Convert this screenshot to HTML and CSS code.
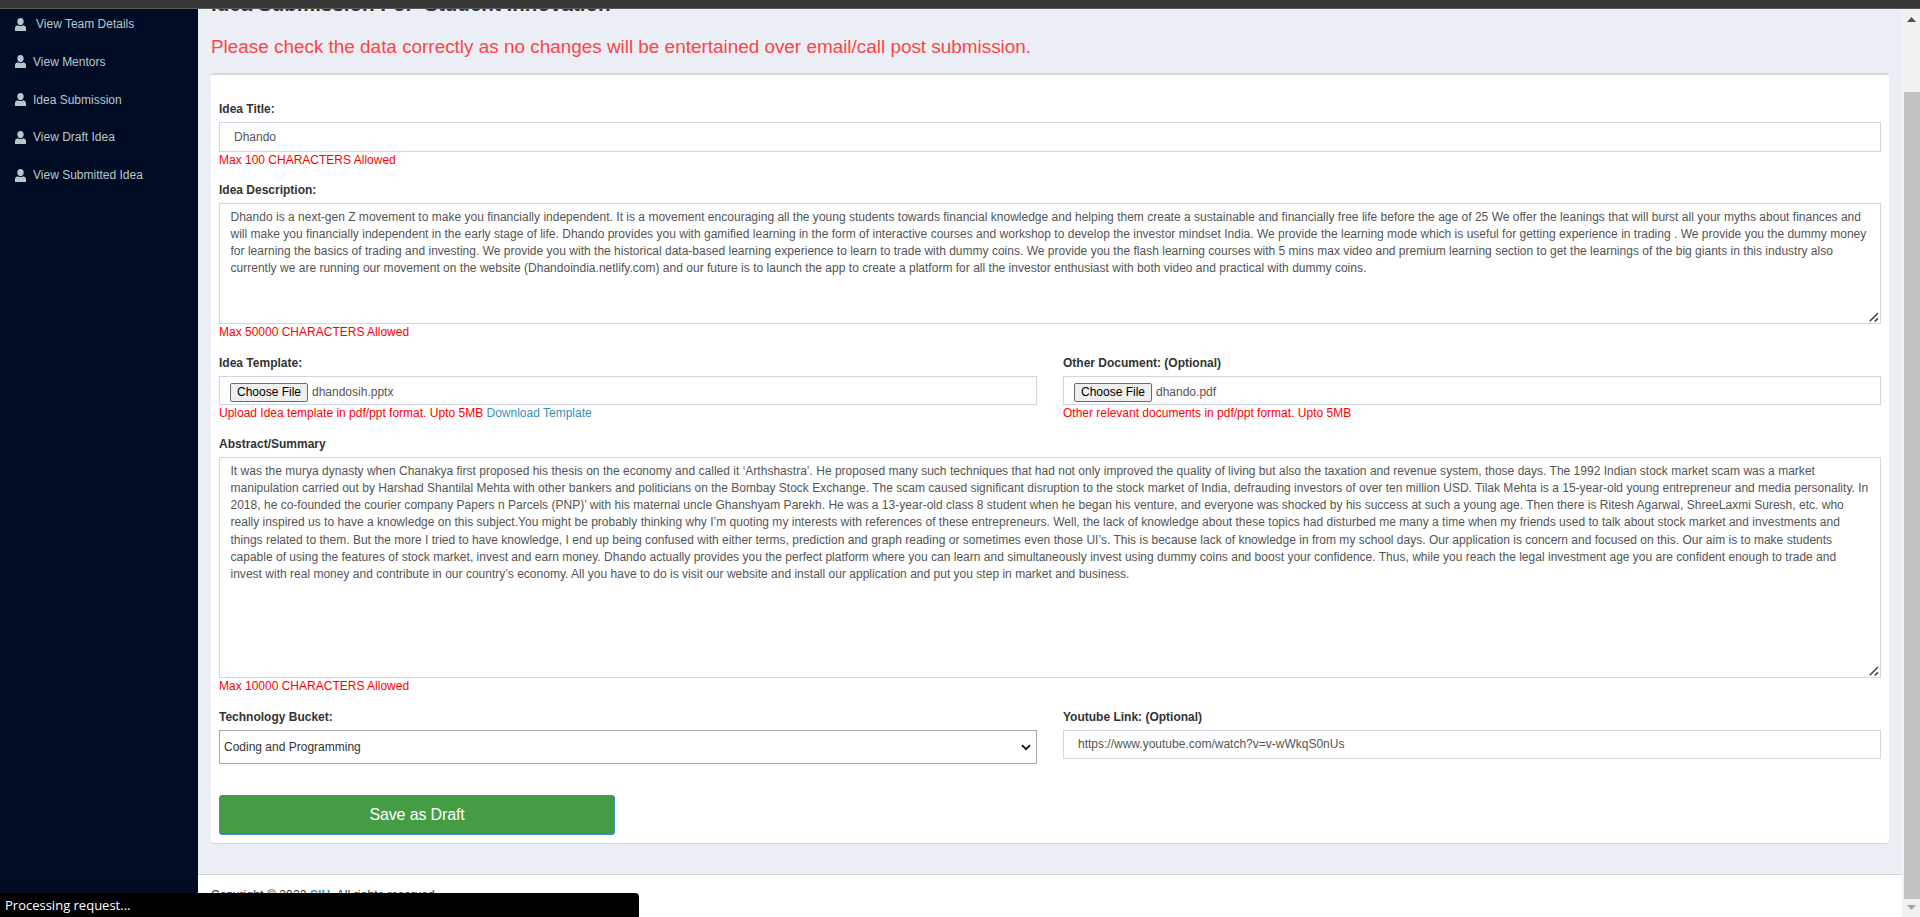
FILE: index.html
```html
<!DOCTYPE html>
<html lang="en">
<head>
<meta charset="utf-8">
<title>Idea Submission</title>
<link rel="stylesheet" href="styles.css">
</head>
<body>
<svg class="defs" width="0" height="0">
  <symbol id="user" viewBox="0 0 11 13">
    <path d="M5.500 0C7.600 0 8.700 1.500 8.700 3.400S7.400 7.200 5.500 7.200 2.300 5.300 2.300 3.400 3.400 0 5.500 0zM0 13v-2.500C0 8.700 1 7.600 2.700 7.200c.8.500 1.800.9 2.800.9s2-.4 2.800-.9c1.700.4 2.700 1.500 2.700 3.300V13z"/>
  </symbol>
  <symbol id="grip" viewBox="0 0 10 10">
    <path d="M.8 9.300 9 1M5.800 9.300 9 6.300" fill="none" stroke="#444" stroke-width="1.600"/>
  </symbol>
</svg>
<div class="topbar"></div>
<div class="app">
  <nav class="sidebar">
    <a class="nav-item first"><svg class="nav-icon"><use href="#user"/></svg><span>View Team Details</span></a>
    <a class="nav-item"><svg class="nav-icon"><use href="#user"/></svg><span>View Mentors</span></a>
    <a class="nav-item"><svg class="nav-icon"><use href="#user"/></svg><span>Idea Submission</span></a>
    <a class="nav-item"><svg class="nav-icon"><use href="#user"/></svg><span>View Draft Idea</span></a>
    <a class="nav-item"><svg class="nav-icon"><use href="#user"/></svg><span>View Submitted Idea</span></a>
  </nav>
  <main class="main">
    <section class="content">
      <h1 class="title">Idea Submission For 'Student Innovation'</h1>
      <p class="warning">Please check the data correctly as no changes will be entertained over email/call post submission.</p>
      <div class="card">
        <div class="group title-group">
          <label class="label">Idea Title:</label>
          <div class="input tall">Dhando</div>
          <div class="hint">Max 100 CHARACTERS Allowed</div>
        </div>
        <div class="group">
          <label class="label">Idea Description:</label>
          <div class="area desc">
            <span class="line">Dhando is a next-gen Z movement to make you financially independent. It is a movement encouraging all the young students towards financial knowledge and helping them create a sustainable and financially free life before the age of 25 We offer the leanings that will burst all your myths about finances and</span>
            <span class="line">will make you financially independent in the early stage of life. Dhando provides you with gamified learning in the form of interactive courses and workshop to develop the investor mindset India. We provide the learning mode which is useful for getting experience in trading . We provide you the dummy money</span>
            <span class="line">for learning the basics of trading and investing. We provide you with the historical data-based learning experience to learn to trade with dummy coins. We provide you the flash learning courses with 5 mins max video and premium learning section to get the learnings of the big giants in this industry also</span>
            <span class="line">currently we are running our movement on the website (Dhandoindia.netlify.com) and our future is to launch the app to create a platform for all the investor enthusiast with both video and practical with dummy coins.</span>
            <svg class="grip"><use href="#grip"/></svg>
          </div>
          <div class="hint">Max 50000 CHARACTERS Allowed</div>
        </div>
        <div class="row">
          <div class="group">
            <label class="label">Idea Template:</label>
            <div class="input file"><span class="choose">Choose File</span><span>dhandosih.pptx</span></div>
            <div class="hint">Upload Idea template in pdf/ppt format. Upto 5MB <a class="link">Download Template</a></div>
          </div>
          <div class="group">
            <label class="label">Other Document: (Optional)</label>
            <div class="input file"><span class="choose">Choose File</span><span>dhando.pdf</span></div>
            <div class="hint">Other relevant documents in pdf/ppt format. Upto 5MB</div>
          </div>
        </div>
        <div class="group">
          <label class="label">Abstract/Summary</label>
          <div class="area abstract">
            <span class="line">It was the murya dynasty when Chanakya first proposed his thesis on the economy and called it ‘Arthshastra’. He proposed many such techniques that had not only improved the quality of living but also the taxation and revenue system, those days. The 1992 Indian stock market scam was a market</span>
            <span class="line">manipulation carried out by Harshad Shantilal Mehta with other bankers and politicians on the Bombay Stock Exchange. The scam caused significant disruption to the stock market of India, defrauding investors of over ten million USD. Tilak Mehta is a 15-year-old young entrepreneur and media personality. In</span>
            <span class="line">2018, he co-founded the courier company Papers n Parcels (PNP)’ with his maternal uncle Ghanshyam Parekh. He was a 13-year-old class 8 student when he began his venture, and everyone was shocked by his success at such a young age. Then there is Ritesh Agarwal, ShreeLaxmi Suresh, etc. who</span>
            <span class="line">really inspired us to have a knowledge on this subject.You might be probably thinking why I’m quoting my interests with references of these entrepreneurs. Well, the lack of knowledge about these topics had disturbed me many a time when my friends used to talk about stock market and investments and</span>
            <span class="line">things related to them. But the more I tried to have knowledge, I end up being confused with either terms, prediction and graph reading or sometimes even those UI’s. This is because lack of knowledge in from my school days. Our application is concern and focused on this. Our aim is to make students</span>
            <span class="line">capable of using the features of stock market, invest and earn money. Dhando actually provides you the perfect platform where you can learn and simultaneously invest using dummy coins and boost your confidence. Thus, while you reach the legal investment age you are confident enough to trade and</span>
            <span class="line">invest with real money and contribute in our country’s economy. All you have to do is visit our website and install our application and put you step in market and business.</span>
            <svg class="grip"><use href="#grip"/></svg>
          </div>
          <div class="hint">Max 10000 CHARACTERS Allowed</div>
        </div>
        <div class="row">
          <div class="group">
            <label class="label">Technology Bucket:</label>
            <div class="select"><span>Coding and Programming</span><svg class="chevron" viewBox="0 0 10 7"><path d="M1 1.200l4 4 4-4" fill="none" stroke="#111" stroke-width="1.900"/></svg></div>
          </div>
          <div class="group">
            <label class="label">Youtube Link: (Optional)</label>
            <div class="input">https://www.youtube.com/watch?v=v-wWkqS0nUs</div>
          </div>
        </div>
        <button class="save">Save as Draft</button>
      </div>
    </section>
    <footer class="footer"><span>Copyright © 2022 <a class="link brand">SIH</a>. All rights reserved.</span></footer>
  </main>
  <div class="scrollbar">
    <svg class="arrow" viewBox="0 0 9 5"><path d="M4.500 0 9 5H0z" fill="#505050"/></svg>
    <div class="thumb"></div>
    <svg class="arrow" viewBox="0 0 9 5"><path d="M0 0h9L4.500 5z" fill="#a3a3a3"/></svg>
  </div>
</div>
<div class="toast">Processing request...</div>
</body>
</html>
```
FILE: styles.css
```css
* { box-sizing: border-box; }
body {
  margin: 0;
  height: 917px;
  overflow: hidden;
  font: 12px/17px "Liberation Sans", Arial, sans-serif;
  color: #333;
  background: #ebeef4;
}
.defs { position: absolute; }
.topbar {
  position: relative;
  z-index: 1;
  height: 9px;
  background: #353535;
  border-bottom: 1px solid #5c5c5c;
}
.app { display: flex; height: 908px; }
.sidebar { width: 198px; background: #000c24; padding-top: 7px; }
.nav-item {
  display: flex;
  align-items: center;
  height: 17px;
  margin-bottom: 20.8px;
  padding-left: 15px;
  gap: 7px;
  color: #b8c7ce;
  white-space: nowrap;
}
.nav-item.first { gap: 10px; }
.nav-icon { width: 11px; height: 13px; margin-top: -1px; fill: #b8c7ce; }
.main { flex: 1; display: flex; flex-direction: column; min-width: 0; }
.content { height: 865px; padding: 0 13px; background: #ebeef4; }
.title {
  height: 24px;
  margin: -17px 0 0;
  font-size: 20.6px;
  line-height: 24px;
  color: #333;
  white-space: nowrap;
}
.warning {
  margin: 19px 0 0;
  height: 38px;
  font-size: 18.9px;
  line-height: 24px;
  color: #fb4548;
  white-space: nowrap;
}
.card {
  height: 771px;
  padding: 25px 8px 0;
  background: #fff;
  border-top: 2px solid #d2d6de;
  border-bottom: 1px solid #d2d6de;
  border-radius: 3px;
}
.row { display: grid; grid-template-columns: 1fr 1fr; gap: 26px; }
.group { padding-bottom: 13px; }
.title-group { padding-bottom: 12px; }
.label { display: block; padding-top: 1px; margin-bottom: 4px; font-weight: 700; }
.input {
  display: flex;
  align-items: center;
  height: 29px;
  padding: 0 14px;
  border: 1px solid #d2d6de;
  color: #555;
}
.tall { height: 30px; }
.file { padding: 3px 10px 0; gap: 4px; }
.choose {
  width: 78px;
  height: 19px;
  border: 1px solid #6b6b6b;
  border-radius: 2px;
  background: #efefef;
  color: #000;
  text-align: center;
}
.hint { color: #f00; white-space: nowrap; }
.link { color: #3c8dbc; }
.area {
  position: relative;
  padding: 5px 10.500px;
  border: 1px solid #d2d6de;
  color: #555;
  line-height: 17.14px;
  letter-spacing: .013px;
}
.line { display: block; white-space: nowrap; }
.desc { height: 121px; }
.abstract { height: 221px; }
.grip { position: absolute; right: 1px; bottom: 1px; width: 10px; height: 10px; }
.select {
  display: flex;
  align-items: center;
  justify-content: space-between;
  height: 34px;
  padding: 0 5px 0 4px;
  border: 1px solid #aaa;
}
.chevron { width: 10px; height: 7px; }
.save {
  display: block;
  width: 396px;
  height: 40px;
  margin-top: 18px;
  padding: 0;
  border: 1px solid #3c8dbc;
  border-radius: 3px;
  background: #449d44;
  color: #fff;
  font: 16px "Liberation Sans", Arial, sans-serif;
  letter-spacing: -.15px;
}
.footer { flex: 1; padding: 12px 13px; background: #fff; border-top: 1px solid #d2d6de; letter-spacing: .12px; }
.brand { font-weight: 700; }
.scrollbar {
  display: flex;
  flex-direction: column;
  align-items: center;
  width: 18px;
  padding: 8px 0 7px;
  background: #f1f1f1;
}
.arrow { width: 9px; height: 5px; margin-left: 1px; }
.thumb { width: 16px; height: 807px; margin: 70px 0 6px 2px; background: #c1c1c1; }
.toast {
  position: absolute;
  left: 0;
  bottom: 0;
  width: 639px;
  height: 24px;
  padding: 0 5px;
  border-top-right-radius: 4px;
  background: #000;
  color: #fff;
  font: 13px/24px "Open Sans", "Noto Sans", sans-serif;
}
```
